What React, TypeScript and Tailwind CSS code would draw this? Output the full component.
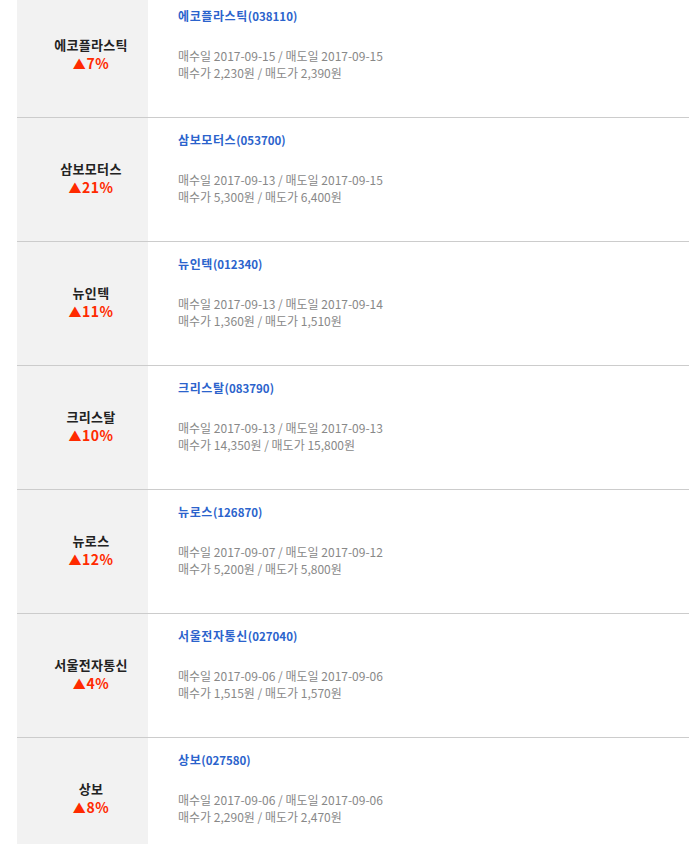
const stocks = [
    { name: "에코플라스틱", code: "038110", pct: "7%", buyDate: "2017-09-15", sellDate: "2017-09-15", buy: "2,230", sell: "2,390" },
    { name: "삼보모터스", code: "053700", pct: "21%", buyDate: "2017-09-13", sellDate: "2017-09-15", buy: "5,300", sell: "6,400" },
    { name: "뉴인텍", code: "012340", pct: "11%", buyDate: "2017-09-13", sellDate: "2017-09-14", buy: "1,360", sell: "1,510" },
    { name: "크리스탈", code: "083790", pct: "10%", buyDate: "2017-09-13", sellDate: "2017-09-13", buy: "14,350", sell: "15,800" },
    { name: "뉴로스", code: "126870", pct: "12%", buyDate: "2017-09-07", sellDate: "2017-09-12", buy: "5,200", sell: "5,800" },
    { name: "서울전자통신", code: "027040", pct: "4%", buyDate: "2017-09-06", sellDate: "2017-09-06", buy: "1,515", sell: "1,570" },
    { name: "상보", code: "027580", pct: "8%", buyDate: "2017-09-06", sellDate: "2017-09-06", buy: "2,290", sell: "2,470" },
];

export default function App() {
    return (
        <div className="bg-white min-h-screen overflow-hidden pl-[17px] font-['Noto_Sans_CJK_KR',sans-serif]">
            <div className="-mt-[6px]">
                {stocks.map((s) => (
                    <div key={s.code} className="flex h-[124px] border-b border-[#cccccc]">
                        <div className="w-[131px] shrink-0 bg-[#f2f2f2] flex flex-col items-center justify-center pb-[2px] pl-[17px]">
                            <span className="text-[13px] leading-[18px] font-bold text-[#222222] tracking-[0.3px]">{s.name}</span>
                            <span className="text-[14px] leading-[18px] font-bold text-[#ff2a00] tracking-[0.5px]">
                                <span className="text-[13px]">▲</span>{s.pct}
                            </span>
                        </div>
                        <div className="flex-1 pl-[30px] pt-[11px]">
                            <div className="leading-[18px] font-bold text-[#2b63cc]">
                                <span className="text-[12px] tracking-[0.6px]">{s.name}</span>
                                <span className="text-[11.5px]">({s.code})</span>
                            </div>
                            <div className="mt-[22px] text-[12px] leading-[17px] text-[#888888]">
                                <div>매수일 {s.buyDate} / 매도일 {s.sellDate}</div>
                                <div>매수가 {s.buy}원 / 매도가 {s.sell}원</div>
                            </div>
                        </div>
                    </div>
                ))}
            </div>
        </div>
    );
}
